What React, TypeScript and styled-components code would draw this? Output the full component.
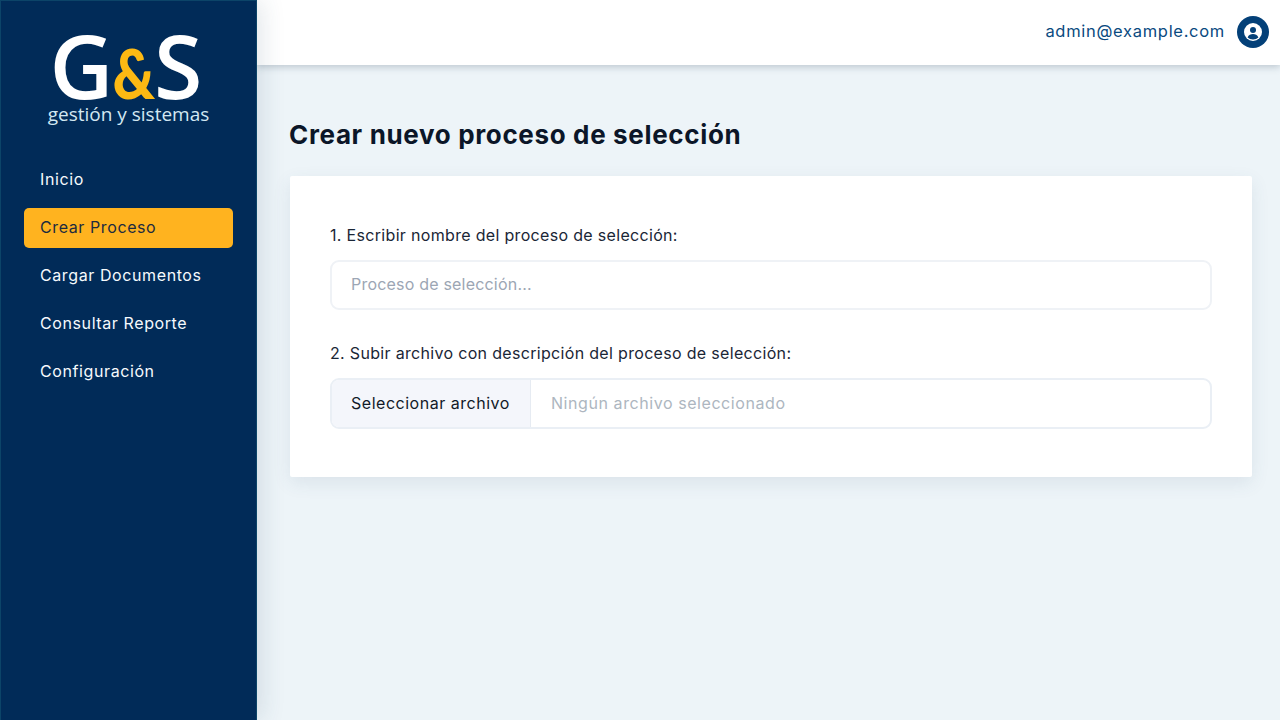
import React from "react";
import styled, { createGlobalStyle } from "styled-components";

const Global = createGlobalStyle`
  html, body { margin: 0; padding: 0; height: 100%; }
  body { font-family: "Inter", "Liberation Sans", sans-serif; background: #edf4f8; overflow: hidden; }
  #root { height: 100%; }
  * { box-sizing: border-box; }
`;

const Shell = styled.div`
  display: flex;
  width: 1280px;
  height: 720px;
`;

const Sidebar = styled.aside`
  position: relative;
  z-index: 2;
  flex: 0 0 257px;
  background: #012b58;
  border-top: 1px solid #0c4468;
  border-left: 1px solid #0c4468;
  border-right: 1px solid #0c4468;
  box-shadow: 6px 0 22px rgba(40, 70, 100, 0.12);
  padding: 22px 23px 0;
  display: flex;
  flex-direction: column;
`;

const Logo = styled.div`
  display: flex;
  flex-direction: column;
  align-items: center;
  height: 137px;
  font-family: "Open Sans", "Noto Sans", sans-serif;
`;

const LogoMark = styled.div`
  display: flex;
  align-items: baseline;
  height: 84px;
  margin-right: 5px;
  color: #fff;
  font-size: 88px;
  line-height: 84px;
  font-weight: 600;
`;

const LogoAmp = styled.span`
  display: inline-block;
  transform: scaleX(0.86);
  color: #fdb913;
  font-family: "Lato", sans-serif;
  font-size: 68px;
  line-height: 68px;
  font-weight: 900;
  margin: 0 -5px 0 -4px;
`;

const LogoTag = styled.div`
  color: #d3e8f2;
  font-size: 19px;
  line-height: 22px;
  margin-top: -4px;
`;

const Nav = styled.nav`
  display: flex;
  flex-direction: column;
  gap: 8px;
`;

const NavItem = styled.a<{ $active?: boolean }>`
  display: flex;
  align-items: center;
  height: 40px;
  padding: 0 16px 2px;
  border-radius: 5px;
  font-size: 16px;
  letter-spacing: 0.6px;
  font-weight: 400;
  color: ${(p) => (p.$active ? "#1d2b3f" : "#f6fafd")};
  background: ${(p) => (p.$active ? "#ffb31f" : "transparent")};
`;

const Main = styled.div`
  flex: 1;
  min-width: 0;
  display: flex;
  flex-direction: column;
`;

const Header = styled.header`
  height: 65px;
  flex: 0 0 65px;
  background: #fff;
  box-shadow: 0 2px 7px rgba(60, 80, 100, 0.28);
  display: flex;
  align-items: center;
  justify-content: flex-end;
  gap: 12px;
  padding: 0 11px 2px 0;
`;

const Email = styled.span`
  color: #0a4a80;
  font-size: 16.5px;
  letter-spacing: 0.7px;
  margin-bottom: 2px;
`;

const Avatar = styled.div`
  width: 32px;
  height: 32px;
  border-radius: 50%;
  background: #034078;
  display: flex;
  align-items: center;
  justify-content: center;
`;

const Content = styled.main`
  padding: 53px 28px 0 32px;
`;

const Title = styled.h1`
  margin: 0 0 24px 0;
  font-size: 26px;
  line-height: 34px;
  font-weight: 700;
  color: #0b1628;
  letter-spacing: 0.65px;
`;

const Card = styled.section`
  margin-left: 1px;
  height: 301px;
  background: #fff;
  border-radius: 2px;
  padding: 47px 40px 0;
  box-shadow: 0 6px 18px rgba(60, 90, 120, 0.1);
`;

const Field = styled.div`
  margin-bottom: 31px;
`;

const Label = styled.label`
  display: block;
  font-size: 16px;
  line-height: 24px;
  color: #1a2636;
  margin-bottom: 13px;
  letter-spacing: 0.32px;
`;

const TextInput = styled.div`
  height: 50px;
  border: 2px solid #eff2f6;
  border-radius: 9px;
  background: #fff;
  display: flex;
  align-items: center;
  padding: 0 19px 2px;
  color: #9ca6b4;
  font-size: 16px;
  letter-spacing: 0.2px;
`;

const FileInput = styled.div`
  height: 51px;
  border: 2px solid #eaeff5;
  border-radius: 9px;
  overflow: hidden;
  display: flex;
  align-items: stretch;
`;

const FileButton = styled.div`
  flex: 0 0 199px;
  background: #f4f6fb;
  border-right: 1px solid #e6ebf2;
  display: flex;
  align-items: center;
  padding: 0 0 2px 19px;
  color: #111a28;
  font-size: 16px;
  letter-spacing: 0.52px;
`;

const FileName = styled.div`
  display: flex;
  align-items: center;
  padding: 0 0 2px 20px;
  color: #adb6c0;
  font-size: 16px;
  letter-spacing: 0.57px;
`;

export default function App() {
  return (
    <Shell>
      <Global />
      <Sidebar>
        <Logo>
          <LogoMark>
            G<LogoAmp>&amp;</LogoAmp>S
          </LogoMark>
          <LogoTag>gestión y sistemas</LogoTag>
        </Logo>
        <Nav>
          <NavItem>Inicio</NavItem>
          <NavItem $active>Crear Proceso</NavItem>
          <NavItem>Cargar Documentos</NavItem>
          <NavItem>Consultar Reporte</NavItem>
          <NavItem>Configuración</NavItem>
        </Nav>
      </Sidebar>
      <Main>
        <Header>
          <Email>admin@example.com</Email>
          <Avatar>
            <svg width="18" height="18" viewBox="0 0 18 18" fill="none">
              <circle cx="9" cy="9" r="9" fill="#fff" />
              <circle cx="9" cy="7" r="3" fill="#034078" />
              <path d="M3.600 14.400c1-2.400 3.200-3.400 5.400-3.400s4.400 1 5.400 3.400A7.500 7.500 0 0 1 9 16.500a7.500 7.500 0 0 1-5.400-2.100z" fill="#034078" />
            </svg>
          </Avatar>
        </Header>
        <Content>
          <Title>Crear nuevo proceso de selección</Title>
          <Card>
            <Field>
              <Label>1. Escribir nombre del proceso de selección:</Label>
              <TextInput>Proceso de selección...</TextInput>
            </Field>
            <Field>
              <Label>2. Subir archivo con descripción del proceso de selección:</Label>
              <FileInput>
                <FileButton>Seleccionar archivo</FileButton>
                <FileName>Ningún archivo seleccionado</FileName>
              </FileInput>
            </Field>
          </Card>
        </Content>
      </Main>
    </Shell>
  );
}
